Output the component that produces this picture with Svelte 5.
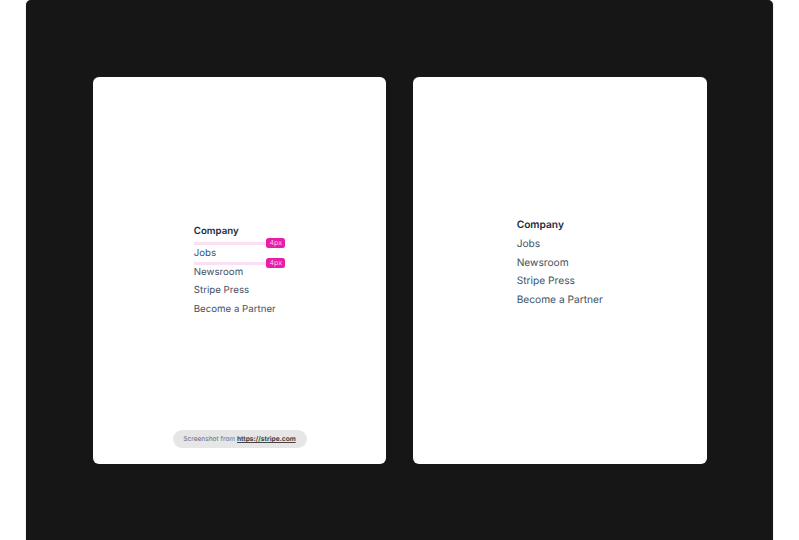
<script>
  const links = ["Newsroom", "Stripe Press", "Become a Partner"];
</script>

<div class="frame">
  <section class="panel">
    <ul class="list list-small">
      <li class="title">Company</li>
      <li class="gap-mark"><span class="badge">4px</span></li>
      <li class="jobs">
        Jobs
        <div class="gap-mark overlay"><span class="badge">4px</span></div>
      </li>
      {#each links as link}
        <li>{link}</li>
      {/each}
    </ul>
    <div class="source">Screenshot from <a href="https://stripe.com">https://stripe.com</a></div>
  </section>

  <section class="panel panel-right">
    <ul class="list">
      <li class="title">Company</li>
      <li>Jobs</li>
      {#each links as link}
        <li>{link}</li>
      {/each}
    </ul>
  </section>
</div>

<style>
  :global(body) {
    background: #fff;
    font-family: Inter, "Liberation Sans", sans-serif;
    text-rendering: geometricPrecision;
  }

  .frame {
    box-sizing: border-box;
    width: 747px;
    height: 540px;
    margin-left: 26px;
    display: flex;
    align-items: flex-start;
    justify-content: center;
    gap: 27px;
    padding-top: 77px;
    background: #161616;
    border-radius: 5px 5px 0 0;
    box-shadow: 0 0 1px #888;
  }

  .panel {
    position: relative;
    width: 293.5px;
    height: 387px;
    display: flex;
    align-items: center;
    justify-content: center;
    background: #fff;
    border-radius: 6px;
  }

  .panel-right {
    padding-bottom: 15px;
    box-sizing: border-box;
  }

  .list {
    margin: 0;
    padding: 0;
    list-style: none;
    font-size: 10.2px;
    line-height: 18.7px;
    color: #425466;
  }

  .list-small {
    font-size: 9.7px;
    line-height: 18.5px;
    width: 91px;
    margin-top: 1px;
  }

  .title {
    font-weight: 600;
    color: #1a2b45;
  }

  .jobs {
    position: relative;
  }

  .gap-mark {
    position: relative;
    height: 3px;
    margin-bottom: 0.5px;
    background: #fbdff2;
    width: 80px;
  }

  .overlay {
    position: absolute;
    left: 0;
    bottom: -1.75px;
  }

  .badge {
    position: absolute;
    left: 72.5px;
    top: -3.5px;
    width: 19px;
    height: 10px;
    border-radius: 2.5px;
    background: #e81eab;
    color: #fbc4e8;
    font-size: 7px;
    line-height: 10px;
    text-align: center;
  }

  .source {
    position: absolute;
    left: 80px;
    top: 353px;
    width: 134px;
    height: 18px;
    border-radius: 9px;
    background: #e6e6e6;
    color: #6e6e6e;
    font-size: 6.6px;
    line-height: 18px;
    text-align: center;
    white-space: nowrap;
  }

  .source a {
    color: #444;
    font-weight: 700;
  }
</style>
